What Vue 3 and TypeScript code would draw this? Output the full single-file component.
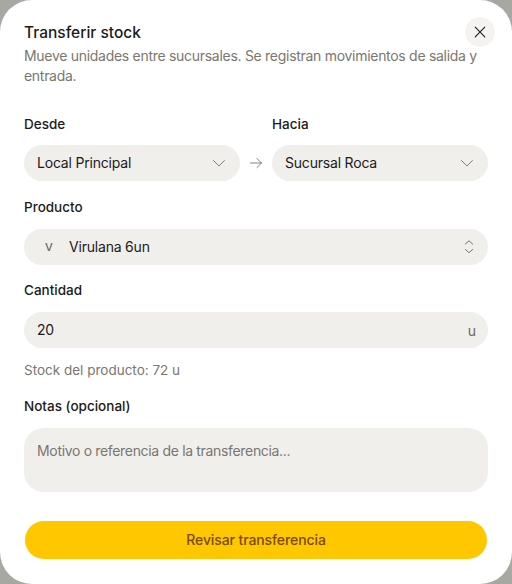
<script setup lang="ts">
const description = 'Mueve unidades entre sucursales. Se registran movimientos de salida y entrada.'
</script>

<template>
  <div class="backdrop">
    <section class="dialog">
      <header class="head">
        <h1 class="title">Transferir stock</h1>
        <button class="close" type="button" aria-label="Cerrar">
          <svg width="16" height="16" viewBox="0 0 16 16" fill="none" stroke="#1c1b19" stroke-width="1.1" stroke-linecap="round">
            <path d="M3.2 3.2l9.6 9.6M12.8 3.2l-9.6 9.6" />
          </svg>
        </button>
      </header>
      <p class="desc">{{ description }}</p>

      <div class="route">
        <div class="field tight">
          <span class="label">Desde</span>
          <div class="control">
            <span class="value">Local Principal</span>
            <svg width="16" height="16" viewBox="0 0 16 16" fill="none" stroke="#85817a" stroke-width="1" stroke-linecap="round" stroke-linejoin="round">
              <path d="M2.5 5.5L8 11l5.5-5.5" />
            </svg>
          </div>
        </div>
        <svg class="arrow" width="16" height="16" viewBox="0 0 16 16" fill="none" stroke="#85817a" stroke-width="1" stroke-linecap="round" stroke-linejoin="round">
          <path d="M2.5 8h11M9 3.5L13.5 8 9 12.5" />
        </svg>
        <div class="field tight">
          <span class="label">Hacia</span>
          <div class="control">
            <span class="value">Sucursal Roca</span>
            <svg width="16" height="16" viewBox="0 0 16 16" fill="none" stroke="#85817a" stroke-width="1" stroke-linecap="round" stroke-linejoin="round">
              <path d="M2.5 5.5L8 11l5.5-5.5" />
            </svg>
          </div>
        </div>
      </div>

      <div class="field product">
        <span class="label">Producto</span>
        <div class="control">
          <span class="avatar">V</span>
          <span class="value grow">Virulana 6un</span>
          <svg width="12" height="16" viewBox="0 0 12 16" fill="none" stroke="#77736c" stroke-width="1" stroke-linecap="round" stroke-linejoin="round">
            <path d="M2.4 5L6 1.8 9.6 5M2.4 10.5L6 13.7l3.6-3.2" />
          </svg>
        </div>
      </div>

      <div class="field qty">
        <span class="label">Cantidad</span>
        <div class="control">
          <span class="value grow">20</span>
          <span class="unit">u</span>
        </div>
        <p class="hint">Stock del producto: 72 u</p>
      </div>

      <div class="field notes">
        <span class="label">Notas (opcional)</span>
        <div class="textarea">Motivo o referencia de la transferencia...</div>
      </div>

      <button class="submit" type="button">Revisar transferencia</button>
    </section>
  </div>
</template>

<style>
html, body { margin: 0; padding: 0; }
</style>

<style scoped>
.backdrop {
  width: 512px;
  height: 584px;
  background: #a8a8a3;
  overflow: hidden;
}
.dialog {
  box-sizing: border-box;
  height: 584px;
  padding: 16px 24px 0;
  background: #fff;
  border-radius: 32px;
  font-family: Inter, "Liberation Sans", sans-serif;
  color: #1c1b19;
  display: flex;
  flex-direction: column;
}
.head {
  display: flex;
  justify-content: space-between;
  align-items: flex-start;
  height: 32px;
}
.title {
  margin: 1px 0 0;
  font-size: 15.5px;
  font-weight: 500;
  line-height: 32px;
}
.close {
  width: 30px;
  height: 30px;
  margin: 1px -7px 0 0;
  padding: 0;
  border: 0;
  border-radius: 50%;
  background: #f4f3f1;
  display: flex;
  align-items: center;
  justify-content: center;
}
.desc {
  margin: -2px 0 0;
  font-size: 14px;
  line-height: 20px;
  color: #7a7670;
  letter-spacing: -0.29px;
}
.route {
  margin-top: 28px;
  display: grid;
  grid-template-columns: 1fr 16px 1fr;
  column-gap: 8px;
  align-items: end;
}
.arrow { margin-bottom: 10px; }
.field {
  display: flex;
  flex-direction: column;
  gap: 12px;
}
.tight { gap: 11px; }
.label {
  font-size: 13.5px;
  font-weight: 500;
  line-height: 20px;
}
.control {
  height: 36px;
  padding: 0 13px;
  background: #f1efec;
  border-radius: 18px;
  display: flex;
  align-items: center;
  justify-content: space-between;
}
.value {
  font-size: 14px;
  letter-spacing: -0.2px;
  padding-bottom: 1px;
}
.grow { flex: 1; }
.avatar {
  width: 24px;
  margin-right: 8px;
  font-size: 11px;
  font-weight: 500;
  color: #6b6861;
  text-align: center;
  font-variant: small-caps;
}
.unit {
  font-size: 14px;
  color: #6b6861;
  margin-right: -1px;
}
.product { margin-top: 16px; }
.qty { margin-top: 15px; }
.hint {
  margin: 0;
  font-size: 13.5px;
  line-height: 20px;
  color: #7a7670;
}
.notes { margin-top: 16px; }
.textarea {
  box-sizing: border-box;
  height: 64px;
  padding: 13px;
  background: #f1efec;
  border-radius: 20px;
  font-size: 14px;
  line-height: 20px;
  color: #7a7670;
  letter-spacing: -0.33px;
}
.submit {
  margin: 29px 1px 0;
  padding: 0 0 1px;
  height: 38px;
  border: 0;
  border-radius: 19px;
  background: #ffc700;
  color: #7a4a00;
  font-family: inherit;
  font-size: 14px;
  font-weight: 500;
  letter-spacing: -0.1px;
}
</style>
